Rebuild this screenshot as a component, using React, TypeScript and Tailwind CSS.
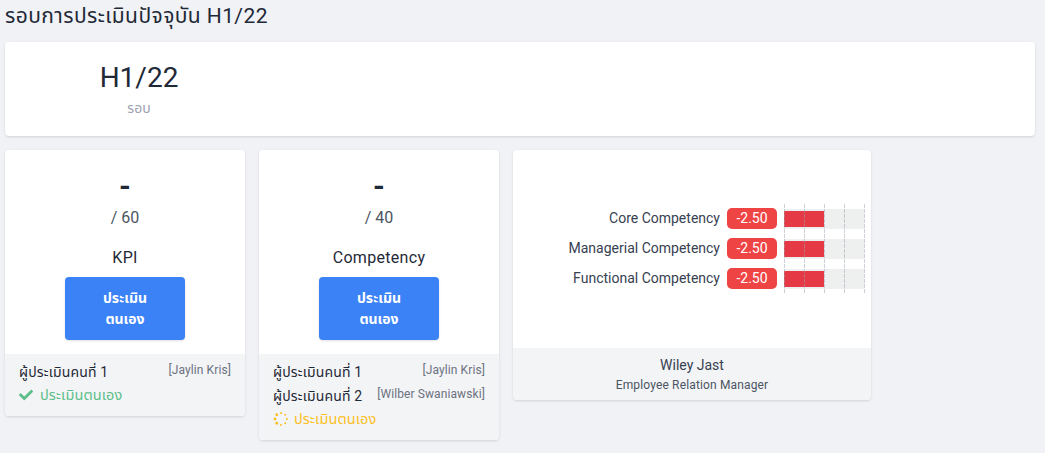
import { FaCheck } from "react-icons/fa";

const competencies = ["Core Competency", "Managerial Competency", "Functional Competency"];

function Spinner() {
  const dots = [0, 45, 90, 135, 180, 225, 270, 315];
  return (
    <svg width="16" height="16" viewBox="0 0 16 16" className="shrink-0">
      {dots.map((a) => (
        <circle
          key={a}
          cx={8 + 6 * Math.cos((a * Math.PI) / 180)}
          cy={8 + 6 * Math.sin((a * Math.PI) / 180)}
          r={a === 135 || a === 180 || a === 225 ? 1.4 : 1}
          fill="#fbbf24"
        />
      ))}
    </svg>
  );
}

function Assessor({ index, name }: { index: number; name: string }) {
  return (
    <div className="flex h-6 items-start justify-between">
      <span className="text-sm leading-6 tracking-[0.15px] text-[#1f2937]">ผู้ประเมินคนที่ {index}</span>
      <span className="text-xs leading-5 tracking-[0.1px] text-[#6b7280]">[{name}]</span>
    </div>
  );
}

function ScoreCard({
  total,
  title,
  children,
}: {
  total: number;
  title: string;
  children: React.ReactNode;
}) {
  return (
    <div className="w-60 overflow-hidden rounded bg-white shadow">
      <div className="flex h-[204px] flex-col items-center pt-4">
        <div className="h-10 text-3xl leading-10 font-bold text-[#1f2937]">-</div>
        <div className="text-base leading-6 text-[#4b5563]">/ {total}</div>
        <div className="mt-4 text-base leading-6 tracking-[0.3px] text-[#1f2937]">{title}</div>
        <button className="mt-[7px] h-[63px] w-[120px] rounded bg-[#3b82f6] text-sm leading-[21px] font-bold text-white shadow-sm">
          ประเมิน
          <br />
          ตนเอง
        </button>
      </div>
      <div className="bg-[#f3f4f6] px-3.5 pt-1.5 pb-[9px]">{children}</div>
    </div>
  );
}

function CompetencyChart() {
  const lines = [0, 20, 40, 60, 80];
  return (
    <svg width="81" height="90" viewBox="0 0 81 90" className="shrink-0">
      {[5, 35, 65].map((y) => (
        <g key={y}>
          <rect x="0" y={y} width="80" height="20" fill="#eeefef" />
          <rect x="0" y={y + 2} width="40" height="16" fill="#e63946" />
        </g>
      ))}
      {lines.map((x) => (
        <line
          key={x}
          x1={x + 0.5}
          x2={x + 0.5}
          y1="0"
          y2="90"
          stroke="#9ca3af"
          strokeOpacity="0.5"
          strokeDasharray="4 1"
        />
      ))}
    </svg>
  );
}

export default function App() {
  return (
    <div
      className="h-[453px] overflow-hidden bg-[#f0f2f5] px-[5px]"
      style={{ fontFamily: 'Roboto, "Noto Sans Thai", "Noto Sans", sans-serif' }}
    >
      <h1 className="h-[42px] pt-0.5 text-[21px] leading-7 tracking-[0.42px] text-[#1f2937]">
        รอบการประเมินปัจจุบัน H1/22
      </h1>

      <div className="h-[94px] w-[1030px] rounded bg-white pt-[18px] shadow">
        <div className="w-[268px] text-center">
          <div className="text-[28px] leading-9 text-[#1f2937]">H1/22</div>
          <div className="mt-1 text-sm leading-4 text-[#9ca3af]">รอบ</div>
        </div>
      </div>

      <div className="mt-3.5 flex items-start gap-3.5">
        <ScoreCard total={60} title="KPI">
          <Assessor index={1} name="Jaylin Kris" />
          <div className="-mt-px flex h-6 items-center gap-[7px] text-[14.5px] tracking-[0.1px] text-[#5cbf8a]">
            <FaCheck size={14} className="shrink-0" />
            <span className="pt-0.5">ประเมินตนเอง</span>
          </div>
        </ScoreCard>

        <ScoreCard total={40} title="Competency">
          <Assessor index={1} name="Jaylin Kris" />
          <Assessor index={2} name="Wilber Swaniawski" />
          <div className="-mt-px flex h-6 items-center gap-[5px] text-[14.5px] tracking-[0.1px] text-[#fbbf24]">
            <Spinner />
            <span className="pt-0.5">ประเมินตนเอง</span>
          </div>
        </ScoreCard>

        <div className="w-[358px] overflow-hidden rounded bg-white shadow">
          <div className="flex h-[198px] items-start justify-end gap-[7px] pt-[54px] pr-[6px]">
            <div className="flex flex-col items-end">
              {competencies.map((name) => (
                <div key={name} className="flex h-[30px] items-center gap-[7px]">
                  <span className="-mt-0.5 text-sm text-[#374151]">{name}</span>
                  <span className="-mt-px w-[50px] rounded-[5px] bg-[#ef4444] py-px text-center text-sm leading-[19px] text-white">
                    -2.50
                  </span>
                </div>
              ))}
            </div>
            <CompetencyChart />
          </div>
          <div className="flex h-[52px] flex-col items-center justify-center bg-[#f3f4f6] pt-0.5">
            <div className="text-sm leading-5 text-[#374151]">Wiley Jast</div>
            <div className="text-xs leading-5 tracking-[0.15px] text-[#4b5563]">Employee Relation Manager</div>
          </div>
        </div>
      </div>
    </div>
  );
}
